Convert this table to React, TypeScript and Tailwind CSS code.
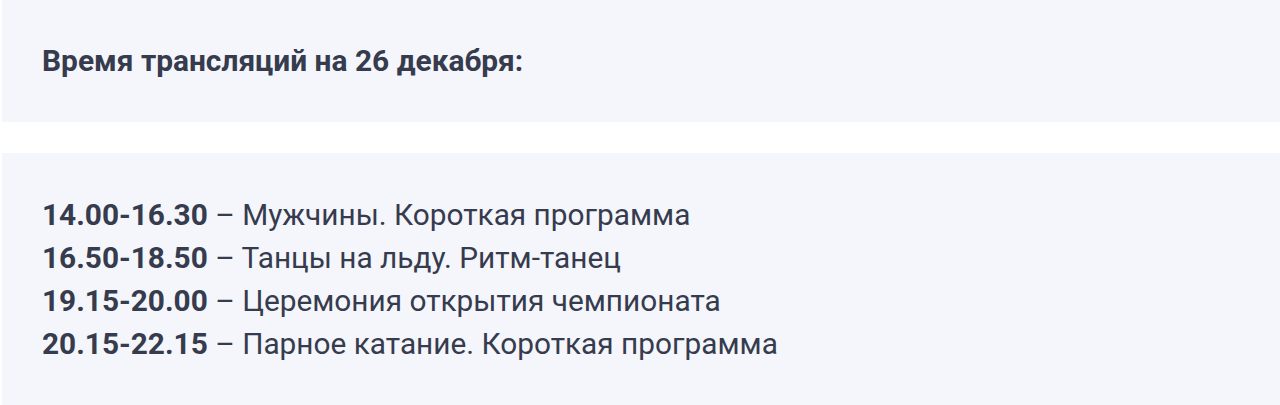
const rows = [
  { time: "14.00-16.30", title: "Мужчины. Короткая программа" },
  { time: "16.50-18.50", title: "Танцы на льду. Ритм-танец" },
  { time: "19.15-20.00", title: "Церемония открытия чемпионата" },
  { time: "20.15-22.15", title: "Парное катание. Короткая программа" },
];

export default function App() {
  return (
    <div className="h-[405px] w-[1280px] bg-white pl-[2px] font-['Roboto',sans-serif] text-[#363b4d]">
      <div className="flex h-[122px] items-center bg-[#f4f6fb] px-10">
        <h2 className="text-[29.9px] font-bold">Время трансляций на 26 декабря:</h2>
      </div>
      <div className="mt-[31px] h-[252px] bg-[#f4f6fb] px-10 pt-[40px]">
        {rows.map((r) => (
          <p key={r.time} className="text-[29.8px] leading-[43px]">
            <span className="font-bold">{r.time}</span> – {r.title}
          </p>
        ))}
      </div>
    </div>
  );
}
